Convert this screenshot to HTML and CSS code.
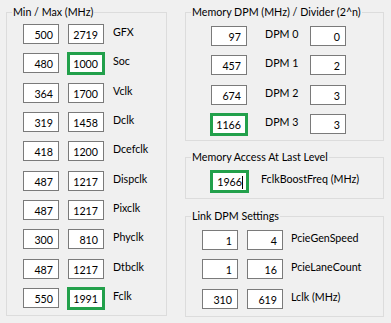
FILE: index.html
```html
<!DOCTYPE html>
<html lang="en">
<head>
  <meta charset="UTF-8">
  <meta name="viewport" content="width=device-width, initial-scale=1.0">
  <title>Clock Settings</title>
  <link rel="stylesheet" href="styles.css">
</head>
<body>
  <div class="dialog">
    <fieldset class="group minmax">
      <legend>Min / Max (MHz)</legend>
      <div class="rows">
        <div class="row"><div class="box">500</div><div class="box">2719</div><span class="label">GFX</span></div>
        <div class="row"><div class="box">480</div><div class="box hl">1000</div><span class="label">Soc</span></div>
        <div class="row"><div class="box">364</div><div class="box">1700</div><span class="label">Vclk</span></div>
        <div class="row"><div class="box">319</div><div class="box">1458</div><span class="label">Dclk</span></div>
        <div class="row"><div class="box">418</div><div class="box">1200</div><span class="label">Dcefclk</span></div>
        <div class="row"><div class="box">487</div><div class="box">1217</div><span class="label">Dispclk</span></div>
        <div class="row"><div class="box">487</div><div class="box">1217</div><span class="label">Pixclk</span></div>
        <div class="row"><div class="box">300</div><div class="box">810</div><span class="label">Phyclk</span></div>
        <div class="row"><div class="box">487</div><div class="box">1217</div><span class="label">Dtbclk</span></div>
        <div class="row"><div class="box">550</div><div class="box hl">1991</div><span class="label">Fclk</span></div>
      </div>
    </fieldset>

    <div class="side">
      <fieldset class="group memdpm">
        <legend>Memory DPM (MHz) / Divider (2^n)</legend>
        <div class="rows">
          <div class="row"><div class="box">97</div><span class="label dpm">DPM 0</span><div class="box">0</div></div>
          <div class="row"><div class="box">457</div><span class="label dpm">DPM 1</span><div class="box">2</div></div>
          <div class="row"><div class="box">674</div><span class="label dpm">DPM 2</span><div class="box">3</div></div>
          <div class="row"><div class="box hl">1166</div><span class="label dpm">DPM 3</span><div class="box">3</div></div>
        </div>
      </fieldset>

      <fieldset class="group memaccess">
        <legend>Memory Access At Last Level</legend>
        <div class="rows">
          <div class="row"><div class="box hl">1966<span class="caret"></span></div><span class="label">FclkBoostFreq (MHz)</span></div>
        </div>
      </fieldset>

      <fieldset class="group link">
        <legend>Link DPM Settings</legend>
        <div class="rows">
          <div class="row"><div class="box">1</div><div class="box">4</div><span class="label">PcieGenSpeed</span></div>
          <div class="row"><div class="box">1</div><div class="box">16</div><span class="label">PcieLaneCount</span></div>
          <div class="row"><div class="box">310</div><div class="box">619</div><span class="label">Lclk (MHz)</span></div>
        </div>
      </fieldset>
    </div>
  </div>
</body>
</html>
```

FILE: styles.css
```css
body {
  margin: 0;
  background: #f0f0f0;
  font-family: Lato, "Liberation Sans", Arial, sans-serif;
  font-size: 10.7px;
  color: #000;
}
.dialog {
  display: flex;
  width: 391px;
  height: 323px;
  padding: 4px 0 0 6px;
  box-sizing: border-box;
}
.group {
  margin: 0;
  padding: 0;
  border: 1px solid #dcdcdc;
  box-sizing: border-box;
}
.group legend {
  margin-left: 5px;
  padding: 0 1px;
  line-height: 16px;
  white-space: nowrap;
}
.rows {
  display: flex;
  flex-direction: column;
  gap: 9.33px;
}
.row {
  display: flex;
  align-items: flex-start;
  white-space: nowrap;
}
.box {
  width: 36px;
  height: 20px;
  box-sizing: border-box;
  border: 1px solid #7a7a7a;
  background: #fff;
  text-align: right;
  padding-right: 5px;
  line-height: 19px;
}
.box.hl {
  border: 3px solid #22a04b;
  width: 38px;
  height: 23px;
  margin: -1px -1px -2px -1px;
  padding-right: 4px;
  line-height: 18px;
}
.caret {
  display: inline-block;
  width: 1px;
  height: 13px;
  margin-right: -1px;
  background: #000;
  vertical-align: -3px;
}
.label {
  line-height: 15px;
}

.minmax {
  width: 161px;
  height: 312px;
}
.minmax .rows {
  padding: 4px 0 0 16px;
}
.minmax .box {
  margin-right: 9px;
}
.minmax .box.hl {
  margin-right: 8px;
}

.side {
  display: flex;
  flex-direction: column;
  margin-left: 18px;
  width: 199px;
}
.memdpm {
  height: 137px;
}
.memdpm .rows {
  padding: 6px 0 0 25px;
}
.memdpm .box:first-child {
  margin-right: 18px;
}
.memdpm .box.hl:first-child {
  margin-right: 17px;
}
.label.dpm {
  width: 45px;
}

.memaccess {
  margin-top: 8px;
  height: 50px;
}
.memaccess .rows {
  padding: 6px 0 0 25px;
}
.memaccess .box.hl {
  width: 39px;
  margin-right: 12px;
}

.link {
  margin-top: 9px;
  height: 109px;
}
.link .rows {
  padding: 6px 0 0 16px;
}
.link .box {
  margin-right: 9px;
}
.link .box + .box {
  margin-right: 8px;
}
```
